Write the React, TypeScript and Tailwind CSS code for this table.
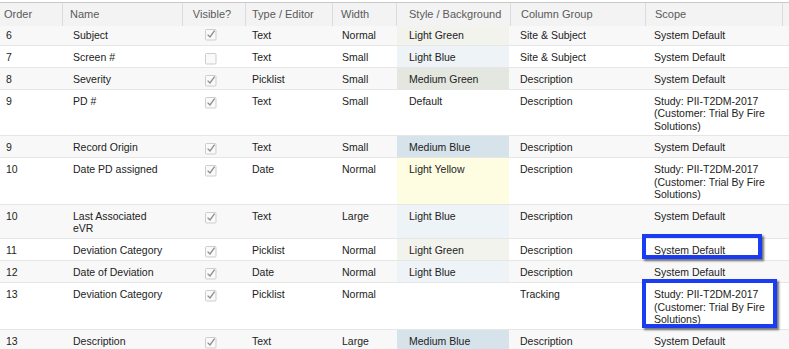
import React from "react"

type Row = {
    order: string
    name: string
    visible: boolean
    type: string
    width: string
    style: string
    group: string
    scope: string
    highlight?: "short" | "tall"
}

const STUDY = "Study: PII-T2DM-2017 (Customer: Trial By Fire Solutions)"

const rows: Row[] = [
    { order: "6", name: "Subject", visible: true, type: "Text", width: "Normal", style: "Light Green", group: "Site & Subject", scope: "System Default" },
    { order: "7", name: "Screen #", visible: false, type: "Text", width: "Small", style: "Light Blue", group: "Site & Subject", scope: "System Default" },
    { order: "8", name: "Severity", visible: true, type: "Picklist", width: "Small", style: "Medium Green", group: "Description", scope: "System Default" },
    { order: "9", name: "PD #", visible: true, type: "Text", width: "Small", style: "Default", group: "Description", scope: STUDY },
    { order: "9", name: "Record Origin", visible: true, type: "Text", width: "Small", style: "Medium Blue", group: "Description", scope: "System Default" },
    { order: "10", name: "Date PD assigned", visible: true, type: "Date", width: "Normal", style: "Light Yellow", group: "Description", scope: STUDY },
    { order: "10", name: "Last Associated eVR", visible: true, type: "Text", width: "Large", style: "Light Blue", group: "Description", scope: "System Default" },
    { order: "11", name: "Deviation Category", visible: true, type: "Picklist", width: "Normal", style: "Light Green", group: "Description", scope: "System Default", highlight: "short" },
    { order: "12", name: "Date of Deviation", visible: true, type: "Date", width: "Normal", style: "Light Blue", group: "Description", scope: "System Default" },
    { order: "13", name: "Deviation Category", visible: true, type: "Picklist", width: "Normal", style: "", group: "Tracking", scope: STUDY, highlight: "tall" },
    { order: "13", name: "Description", visible: true, type: "Text", width: "Large", style: "Medium Blue", group: "Description", scope: "System Default" },
]

const styleBg: Record<string, string> = {
    "Light Green": "bg-[#f2f3ed]",
    "Light Blue": "bg-[#edf3f6]",
    "Medium Green": "bg-[#e3e7df]",
    "Medium Blue": "bg-[#d7e3ea]",
    "Light Yellow": "bg-[#fefde1]",
}

function Check({ checked }: { checked: boolean }) {
    return (
        <svg width="12" height="12" viewBox="0 0 12 12" className="mt-[1px]">
            <rect x="0.5" y="0.5" width="10.5" height="10.5" rx="1" fill="#fafafa" stroke="#cdcdcd" />
            {checked && <path d="M2.6 5.6 L5 8 L9.6 1.6" fill="none" stroke="#8c8c8c" strokeWidth="1.3" />}
        </svg>
    )
}

const grid = "grid grid-cols-[62px_120px_63px_87px_64px_114px_135px_137px_7px]"

export default function App() {
    return (
        <div className="w-[789px] h-[349px] overflow-hidden bg-white pt-[2px] font-['Liberation_Sans',Arial,sans-serif] text-[10.5px] leading-[12.4px] text-[#222]">
            <div className={`${grid} h-[24px] border-t border-[#c9c9c9] bg-[#f3f3f3] text-[11px] text-[#5a5a5a]`}>
                <div className="flex items-center pl-[4px]">Order</div>
                <div className="flex items-center border-l border-[#dcdcdc] pl-[7px]">Name</div>
                <div className="flex items-center justify-center border-l border-[#dcdcdc] pr-[4px]">Visible?</div>
                <div className="flex items-center border-l border-[#dcdcdc] pl-[6px]">Type / Editor</div>
                <div className="flex items-center border-l border-[#dcdcdc] pl-[8px]">Width</div>
                <div className="flex items-center border-l border-[#dcdcdc] pl-[12px]">Style / Background</div>
                <div className="flex items-center border-l border-[#dcdcdc] pl-[10px]">Column Group</div>
                <div className="flex items-center border-l border-[#dcdcdc] pl-[9px]">Scope</div>
                <div className="border-l border-[#dcdcdc]"></div>
            </div>

            {rows.map((r, i) => {
                const pt = i === 0 ? "pt-[3px]" : "pt-[5px]"
                return (
                    <div
                        key={i}
                        className={`${grid} border-b border-[#e6e6e6] ${i % 2 === 0 ? "bg-[#f8f8f8]" : "bg-white"}`}
                    >
                        <div className={`${pt} pb-[3.5px] pl-[6px]`}>{r.order}</div>
                        <div className={`${pt} pb-[3.5px] pl-[11px] pr-[16px]`}>{r.name}</div>
                        <div className={`${i === 0 ? "pt-[2px]" : "pt-[6px]"} flex justify-center pr-[6px]`}>
                            <Check checked={r.visible} />
                        </div>
                        <div className={`${pt} pb-[3.5px] pl-[7px]`}>{r.type}</div>
                        <div className={`${pt} pb-[3.5px] pl-[10px]`}>{r.width}</div>
                        <div className={`${pt} pb-[3.5px] pl-[12px] ml-[1px] mr-[1px] ${styleBg[r.style] ?? ""}`}>{r.style}</div>
                        <div className={`${pt} pb-[3.5px] pl-[10px]`}>{r.group}</div>
                        <div className={`relative ${pt} pb-[3.5px] pl-[9px] pr-[8px]`}>
                            {r.scope}
                            {r.highlight === "short" && (
                                <div className="absolute left-[-3px] top-[-5px] h-[25px] w-[120px] border-[4px] border-[#1a3cf2] shadow-[2px_2px_2px_rgba(0,0,0,0.55)]"></div>
                            )}
                            {r.highlight === "tall" && (
                                <div className="absolute left-[-3px] top-[-4px] h-[49px] w-[135px] border-[4px] border-[#1a3cf2] shadow-[2px_2px_2px_rgba(0,0,0,0.55)]"></div>
                            )}
                        </div>
                        <div></div>
                    </div>
                )
            })}
        </div>
    )
}
